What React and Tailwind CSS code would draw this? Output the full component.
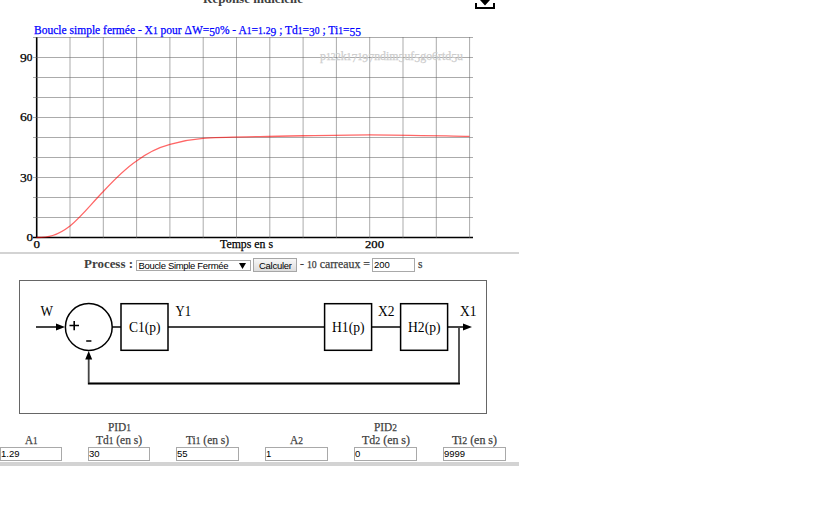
import React from "react";

const SERIF = "font-['Liberation_Serif',serif]";

// Old-style numerals: 0-2 sit near x-height, 3-5, 7 and 9 hang below the baseline.
function shapeOf(ch) {
  if (/[012]/.test(ch)) return "small";
  if (/[34579]/.test(ch)) return "low";
  return "plain";
}

function runs(text) {
  return text.match(/[012]+|[34579]+|[^01234579]+/g) || [];
}

function SvgText({ x, y, w, size = 12.8, fill = "#000", bold, children }) {
  let offset = 0;
  return (
    <text x={x} y={y} textLength={w} lengthAdjust="spacingAndGlyphs" fontSize={size} fill={fill} stroke={fill} strokeWidth={bold ? 0 : 0.25} fontWeight={bold ? 700 : 400} className={SERIF}>
      {runs(children).map((r, i) => {
        const kind = shapeOf(r[0]);
        const target = kind === "low" ? 1.8 : 0;
        const dy = target - offset;
        offset = target;
        return (
          <tspan key={i} dy={dy} fontSize={kind === "small" ? size * 0.83 : size}>
            {r}
          </tspan>
        );
      })}
    </text>
  );
}

function Label({ w, children, bold }) {
  return (
    <svg width={w} height="13" className="block shrink-0 overflow-visible">
      <SvgText x={0} y={10} w={w} fill="#404040" bold={bold}>
        {children}
      </SvgText>
    </svg>
  );
}

const columns = Array.from({ length: 13 }, (_, i) => 70 + i * 33.3);
const lines = Array.from({ length: 10 }, (_, i) => 37.5 + i * 20);

function Chart() {
  return (
    <svg width="519" height="252" className="block shrink-0">
      <SvgText x={203} y={3} w={100} bold fill="#404040">Réponse indicielle</SvgText>
      <path d="M475 3H477V7H493V3H495V9H475ZM480 0H490L485 5.5Z" fill="#000" />
      <SvgText x={34} y={34} w={327} fill="#0000ff">Boucle simple fermée - X1 pour ΔW=50% - A1=1.29 ; Td1=30 ; Ti1=55</SvgText>
      <path d="M33 237.5H473" stroke="#000" strokeWidth="1.7" />
      <path d="M36.7 37V238" stroke="#000" strokeWidth="1.6" />
      <g stroke="#666" strokeOpacity="0.55" strokeWidth="1">
        {lines.map((y) => <path key={y} d={`M33 ${y}H473`} />)}
        {columns.map((x) => <path key={x} d={`M${x} 37V238`} />)}
      </g>
      <SvgText x={320} y={60} w={143} size={13.3} fill="#cdcdcd">p122k17197ndim5uf5go6rtd5u</SvgText>
      <path
        d="M36.5 237.5C48 237.5 57 236 70 226C82 216 92 203 103.3 191.5C114 180 124 169.5 136.5 161C147 153 157 147.8 170 144.3C182 140.8 191 139.2 203 138.3C220 137 240 137 260 136.6C300 136 335 134.8 369.5 134.8C400 134.8 438 135.8 469.5 136.4"
        fill="none" stroke="#ff0000" strokeOpacity="0.6" strokeWidth="1.3"
      />
      <SvgText x={20} y={60.5} w={12.5}>90</SvgText>
      <SvgText x={20} y={121} w={12.5}>60</SvgText>
      <SvgText x={20} y={180.5} w={12.5}>30</SvgText>
      <SvgText x={26.5} y={241} w={6.5}>0</SvgText>
      <SvgText x={33.5} y={248} w={6.5}>0</SvgText>
      <SvgText x={220} y={248} w={53}>Temps en s</SvgText>
      <SvgText x={365} y={248} w={19}>200</SvgText>
    </svg>
  );
}

function Diagram() {
  return (
    <svg width="519" height="134" viewBox="0 280 519 134" className="block shrink-0">
      <rect x="19.5" y="280.5" width="467" height="133" fill="#fff" stroke="#666" />
      <g fill="none" stroke="#444" strokeWidth="1.8">
        <path d="M36 327H58M112 327H121M168 327H325M372 327H401M448 327H465" />
        <path d="M459 327V383.5H88.7V358" />
      </g>
      <path d="M88 383.5H460" stroke="#000" strokeWidth="1.5" />
      <g fill="#000">
        <path d="M56 323.5L65 327L56 330.5ZM463 323.5L472 327L463 330.5ZM85.2 359.5L88.7 351L92.2 359.5Z" />
      </g>
      <g fill="#fff" stroke="#000" strokeWidth="1.5">
        <circle cx="88.8" cy="327" r="23.4" />
        <rect x="121" y="303.7" width="47" height="46.6" />
        <rect x="324.6" y="303.7" width="47" height="46.6" />
        <rect x="400.6" y="303.7" width="47" height="46.6" />
      </g>
      <path d="M69.5 325.5H79M74.2 321V330.3M86.2 341H91.4" stroke="#000" strokeWidth="1.6" />
      <g fontSize="13.6" className={SERIF}>
        <text x="40.5" y="316" textLength="12.5" lengthAdjust="spacingAndGlyphs">W</text>
        <text x="175.5" y="316" textLength="15.5" lengthAdjust="spacingAndGlyphs">Y1</text>
        <text x="378" y="316" textLength="16.5" lengthAdjust="spacingAndGlyphs">X2</text>
        <text x="460" y="316" textLength="16.5" lengthAdjust="spacingAndGlyphs">X1</text>
        <text x="129" y="332" textLength="31.5" lengthAdjust="spacingAndGlyphs">C1(p)</text>
        <text x="332" y="332" textLength="32.5" lengthAdjust="spacingAndGlyphs">H1(p)</text>
        <text x="408" y="332" textLength="32.5" lengthAdjust="spacingAndGlyphs">H2(p)</text>
      </g>
    </svg>
  );
}

const fields = [
  { label: "A1", lw: 12.5, value: "1.29", w: "w-[88px]", box: "w-[62px]" },
  { label: "Td1 (en s)", lw: 46, head: "PID1", value: "30", w: "w-[88px]", box: "w-[62px]" },
  { label: "Ti1 (en s)", lw: 43, value: "55", w: "w-[89px]", box: "w-[63px]" },
  { label: "A2", lw: 13, value: "1", w: "w-[89px]", box: "w-[63px]" },
  { label: "Td2 (en s)", lw: 48, head: "PID2", value: "0", w: "w-[89px]", box: "w-[63px]" },
  { label: "Ti2 (en s)", lw: 45, value: "9999", w: "w-[76px]", box: "w-[63px]" },
];

function Field({ f }) {
  return (
    <div className={`${f.w} shrink-0`}>
      <div className={`${f.box} flex flex-col items-center`}>
        <div className="h-[13px] pt-px">{f.head && <Label w={23}>{f.head}</Label>}</div>
        <div className="h-[13px] pt-px"><Label w={f.lw}>{f.label}</Label></div>
      </div>
      <div className={`${f.box} mt-px h-3.5 border border-[#a9a9a9] bg-white font-['Liberation_Sans',sans-serif] text-[9.5px] leading-[12px] text-black`}>
        {f.value}
      </div>
    </div>
  );
}

export default function App() {
  return (
    <div className="h-[517px] w-[819px] overflow-hidden bg-white">
      <div className="flex w-[519px] flex-col">
        <Chart />
        <div className="h-0.5 bg-[#d3d3d3]" />
        <div className="flex h-[26px] items-start pt-1 pl-[84px] font-['Liberation_Sans',sans-serif] text-[9.5px] text-black">
          <div className="w-[52px]"><Label w={49} bold>Process :</Label></div>
          <div className="mt-[2px] flex h-[11px] w-[115px] items-center justify-between border border-[#a9a9a9] pr-1 pl-px leading-[9px]">
            <svg width="91" height="9" className="overflow-visible"><text x="0.5" y="7.8" textLength="90">Boucle Simple Fermée</text></svg>
            <svg width="7" height="6"><path d="M0 0H7L3.5 6Z" /></svg>
          </div>
          <div className="ml-[2px] flex h-3.5 w-11 items-center justify-center border border-[#a6a6a6] bg-gradient-to-b from-[#f7f7f7] to-[#dddddd]">
            <svg width="33" height="11"><text x="0" y="9" textLength="33">Calculer</text></svg>
          </div>
          <div className="ml-[3px]"><Label w={70}>- 10 carreaux =</Label></div>
          <div className="ml-[2px] h-3.5 w-[43px] border border-[#a9a9a9] pl-px leading-[12px]">200</div>
          <div className="ml-[3px]"><Label w={4.5}>s</Label></div>
        </div>
        <Diagram />
        <div className="flex h-[48px] pt-[6px]">
          {fields.map((f) => <Field key={f.label} f={f} />)}
        </div>
        <div className="h-1 bg-[#d3d3d3]" />
      </div>
    </div>
  );
}
